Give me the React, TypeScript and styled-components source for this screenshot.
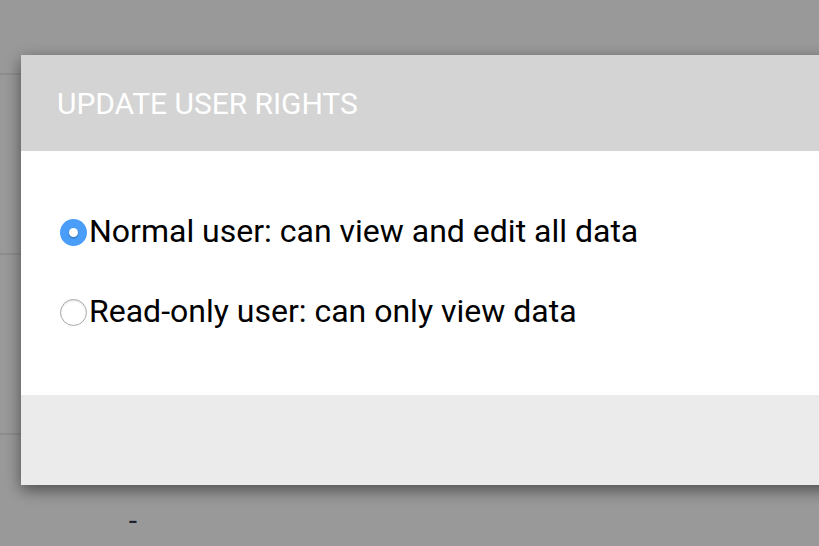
import React from "react";
import styled, { createGlobalStyle } from "styled-components";

const GlobalStyle = createGlobalStyle`
  html, body {
    margin: 0;
    padding: 0;
    width: 100%;
    height: 100%;
    overflow: hidden;
    background: #ffffff;
    font-family: Roboto, "Noto Sans", Arial, sans-serif;
  }
  #root { height: 100%; }
`;

const Page = styled.div`
  display: flex;
  flex-direction: column;
  height: 100%;
  overflow: hidden;
`;

const PageHeader = styled.div`
  height: 73px;
  border-bottom: 2px solid #ececec;
  flex: none;
`;

const TableRow = styled.div`
  display: grid;
  grid-template-columns: 266px 1fr;
  align-items: center;
  height: 178px;
  border-bottom: 2px solid #ececec;
  flex: none;
`;

const Cell = styled.div`
  text-align: center;
  font-size: 30px;
  color: #2e3a52;
  line-height: 1;
  margin-top: -6px;
`;

const Overlay = styled.div`
  position: fixed;
  inset: 0;
  background: rgba(0, 0, 0, 0.4);
`;

const Dialog = styled.div`
  position: fixed;
  top: 55px;
  left: 21px;
  width: 840px;
  display: flex;
  flex-direction: column;
  box-shadow: 0 5px 15px rgba(0, 0, 0, 0.5);
`;

const DialogHeader = styled.div`
  height: 96px;
  background: #d4d4d4;
  display: flex;
  align-items: center;
  padding: 0 36px;
  box-sizing: border-box;
`;

const Title = styled.h2`
  margin: 0;
  font-size: 30px;
  font-weight: 400;
  color: #ffffff;
  letter-spacing: -0.05px;
`;

const DialogBody = styled.div`
  background: #ffffff;
  height: 244px;
  box-sizing: border-box;
  padding: 60px 39px 0;
  display: flex;
  flex-direction: column;
  gap: 40px;
`;

const Option = styled.label`
  display: flex;
  align-items: center;
  height: 40px;
  gap: 2px;
  font-size: 32px;
  color: #000000;
  cursor: pointer;
`;

const Radio = styled.span<{ $checked?: boolean }>`
  flex: none;
  width: 27px;
  height: 27px;
  border-radius: 50%;
  box-sizing: border-box;
  display: flex;
  align-items: center;
  justify-content: center;
  background: ${(p) => (p.$checked ? "#4a9df8" : "#ffffff")};
  border: ${(p) => (p.$checked ? "none" : "1.5px solid #a8a8a8")};
  box-shadow: ${(p) =>
    p.$checked ? "none" : "inset 0 1px 2px rgba(0,0,0,0.12)"};
  margin-top: 2px;
`;

const Dot = styled.span`
  width: 9px;
  height: 9px;
  border-radius: 50%;
  background: #ffffff;
  box-shadow: 0 1px 2px rgba(0, 0, 0, 0.35);
`;

const DialogFooter = styled.div`
  height: 90px;
  background: #ebebeb;
`;

export default function App() {
  return (
    <>
      <GlobalStyle />
      <Page>
        <PageHeader />
        <TableRow />
        <TableRow />
        <TableRow>
          <Cell>-</Cell>
          <Cell />
        </TableRow>
      </Page>
      <Overlay />
      <Dialog role="dialog">
        <DialogHeader>
          <Title>UPDATE USER RIGHTS</Title>
        </DialogHeader>
        <DialogBody>
          <Option>
            <Radio $checked>
              <Dot />
            </Radio>
            Normal user: can view and edit all data
          </Option>
          <Option>
            <Radio />
            Read-only user: can only view data
          </Option>
        </DialogBody>
        <DialogFooter />
      </Dialog>
    </>
  );
}
